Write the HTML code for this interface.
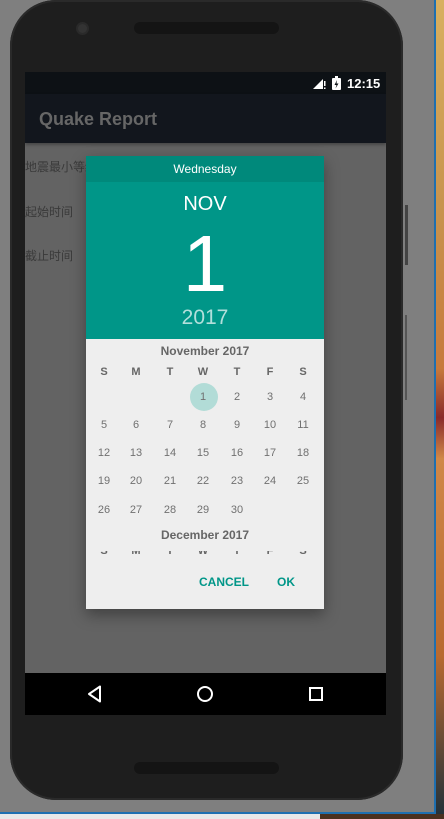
<!DOCTYPE html>
<html><head><meta charset="utf-8"><style>
*{margin:0;padding:0;box-sizing:border-box}
body{width:444px;height:819px;overflow:hidden;background:#7f7f7f;position:relative;font-family:"Liberation Sans","Noto Sans CJK SC",sans-serif}
.abs{position:absolute}
.phone{left:10px;top:0;width:393px;height:800px;background:#1e1e1e;border-radius:46px;box-shadow:inset 0 0 0 2px #2a2a2a}
.screen{left:25px;top:72px;width:361px;height:643px;background:#636363;overflow:hidden}
.cal span{position:absolute;width:30px;margin-left:-15px;text-align:center;font-size:11px;color:#707070}
.dow span{font-weight:bold;color:#666}
</style></head><body>
<div class="abs" style="left:436px;top:0;width:8px;height:819px;background:linear-gradient(#d8b060 0,#c8944e 25%,#c77a3c 45%,#8a2a2a 51%,#d08848 56%,#b86a30 80%,#20303a 100%)"></div>
<div class="abs" style="left:434px;top:0;width:2px;height:814px;background:#1e6fb0"></div>
<div class="abs" style="left:0;top:814px;width:320px;height:5px;background:#e8e8e8"></div>
<div class="abs" style="left:320px;top:814px;width:124px;height:5px;background:#4a3020"></div>
<div class="abs" style="left:0;top:812px;width:436px;height:2px;background:#1e6fb0"></div>
<div class="abs phone"></div>
<div class="abs" style="left:405px;top:205px;width:3px;height:60px;background:#444"></div>
<div class="abs" style="left:405px;top:315px;width:2px;height:85px;background:#555"></div>
<div class="abs" style="left:78px;top:24px;width:9px;height:9px;border-radius:50%;background:#333;box-shadow:0 0 0 2px #2a2a2a"></div>
<div class="abs" style="left:134px;top:22px;width:145px;height:12px;border-radius:6px;background:#141414"></div>
<div class="abs" style="left:134px;top:762px;width:145px;height:12px;border-radius:6px;background:#141414"></div>
<div class="abs screen">
 <div class="abs" style="left:0;top:0;width:361px;height:22px;background:#0d1115"></div>
 <div class="abs" style="left:0;top:22px;width:361px;height:49px;background:#12161d;box-shadow:0 2px 3px rgba(0,0,0,.3)"></div>
 <svg class="abs" style="left:288px;top:6px" width="14" height="12"><path d="M0 11 L10 1 V11Z" fill="#fff"/><rect x="11" y="3" width="1.5" height="5" fill="#fff"/><rect x="11" y="9.5" width="1.5" height="1.5" fill="#fff"/></svg>
 <svg class="abs" style="left:307px;top:4px" width="9" height="14"><rect x="0" y="2" width="9" height="12" rx="1" fill="#fff"/><rect x="3" y="0" width="3" height="2" fill="#fff"/><path d="M5 4 L2.5 9 H4.5 L3.5 12.5 L6.5 7.5 H4.5Z" fill="#0d1115"/></svg>
 <div class="abs" style="left:322px;top:4px;color:#fff;font-size:13px;font-weight:bold">12:15</div>
 <div class="abs" style="left:14px;top:37px;color:#666;font-size:18px;font-weight:bold">Quake Report</div>
 <div class="abs" style="left:0;top:86px;color:#3a3a3a;font-size:12px">地震最小等级</div>
 <div class="abs" style="left:0;top:131px;color:#3a3a3a;font-size:12px">起始时间</div>
 <div class="abs" style="left:0;top:175px;color:#3a3a3a;font-size:12px">截止时间</div>
 <div class="abs" style="left:0;top:601px;width:361px;height:42px;background:#000"></div>
 <svg class="abs" style="left:60px;top:610px" width="240" height="24"><path d="M4 12 L15 4.5 V19.5Z" fill="none" stroke="#fff" stroke-width="2" stroke-linejoin="round"/><circle cx="120" cy="12" r="7" fill="none" stroke="#fff" stroke-width="2"/><rect x="225" y="6" width="12" height="12" fill="none" stroke="#fff" stroke-width="2"/></svg>
</div>
<div class="abs" style="left:86px;top:156px;width:238px;height:453px;background:#eeeeee;box-shadow:0 6px 14px rgba(0,0,0,.35)">
 <div class="abs" style="left:0;top:0;width:238px;height:26px;background:#00897b;color:#fff;font-size:12px;text-align:center;line-height:27px">Wednesday</div>
 <div class="abs" style="left:0;top:26px;width:238px;height:157px;background:#009688"></div>
 <div class="abs" style="left:0;top:37px;width:238px;text-align:center;color:#fff;font-size:20px">NOV</div>
 <div class="abs" style="left:0;top:63px;width:238px;text-align:center;color:#fff;font-size:80px;line-height:90px">1</div>
 <div class="abs" style="left:0;top:150px;width:238px;text-align:center;color:#b2dfdb;font-size:21px">2017</div>
 <div class="abs" style="left:0;top:188px;width:238px;text-align:center;color:#666;font-size:12px;font-weight:bold">November 2017</div>
 <div class="abs" style="left:104px;top:227px;width:28px;height:28px;border-radius:50%;background:#b2dcd7"></div>
 <div class="abs cal dow" style="left:0;top:210px;width:238px"><span style="left:18px">S</span><span style="left:50px">M</span><span style="left:84px">T</span><span style="left:117px">W</span><span style="left:151px">T</span><span style="left:184px">F</span><span style="left:217px">S</span></div>
 <div class="abs cal" style="left:0;top:235px;width:238px"><span style="left:117px">1</span><span style="left:151px">2</span><span style="left:184px">3</span><span style="left:217px">4</span></div>
 <div class="abs cal" style="left:0;top:263px;width:238px"><span style="left:18px">5</span><span style="left:50px">6</span><span style="left:84px">7</span><span style="left:117px">8</span><span style="left:151px">9</span><span style="left:184px">10</span><span style="left:217px">11</span></div>
 <div class="abs cal" style="left:0;top:291px;width:238px"><span style="left:18px">12</span><span style="left:50px">13</span><span style="left:84px">14</span><span style="left:117px">15</span><span style="left:151px">16</span><span style="left:184px">17</span><span style="left:217px">18</span></div>
 <div class="abs cal" style="left:0;top:319px;width:238px"><span style="left:18px">19</span><span style="left:50px">20</span><span style="left:84px">21</span><span style="left:117px">22</span><span style="left:151px">23</span><span style="left:184px">24</span><span style="left:217px">25</span></div>
 <div class="abs cal" style="left:0;top:348px;width:238px"><span style="left:18px">26</span><span style="left:50px">27</span><span style="left:84px">28</span><span style="left:117px">29</span><span style="left:151px">30</span></div>
 <div class="abs" style="left:0;top:372px;width:238px;text-align:center;color:#666;font-size:12px;font-weight:bold">December 2017</div>
 <div class="abs" style="left:0;top:395px;width:238px;height:3px;overflow:hidden"><div class="abs cal dow" style="left:0;top:-6px;width:238px"><span style="left:18px">S</span><span style="left:50px">M</span><span style="left:84px">T</span><span style="left:117px">W</span><span style="left:151px">T</span><span style="left:184px">F</span><span style="left:217px">S</span></div></div>
 <div class="abs" style="left:113px;top:419px;color:#009688;font-size:12px;font-weight:bold">CANCEL</div>
 <div class="abs" style="left:191px;top:419px;color:#009688;font-size:12px;font-weight:bold">OK</div>
</div>
</body></html>
